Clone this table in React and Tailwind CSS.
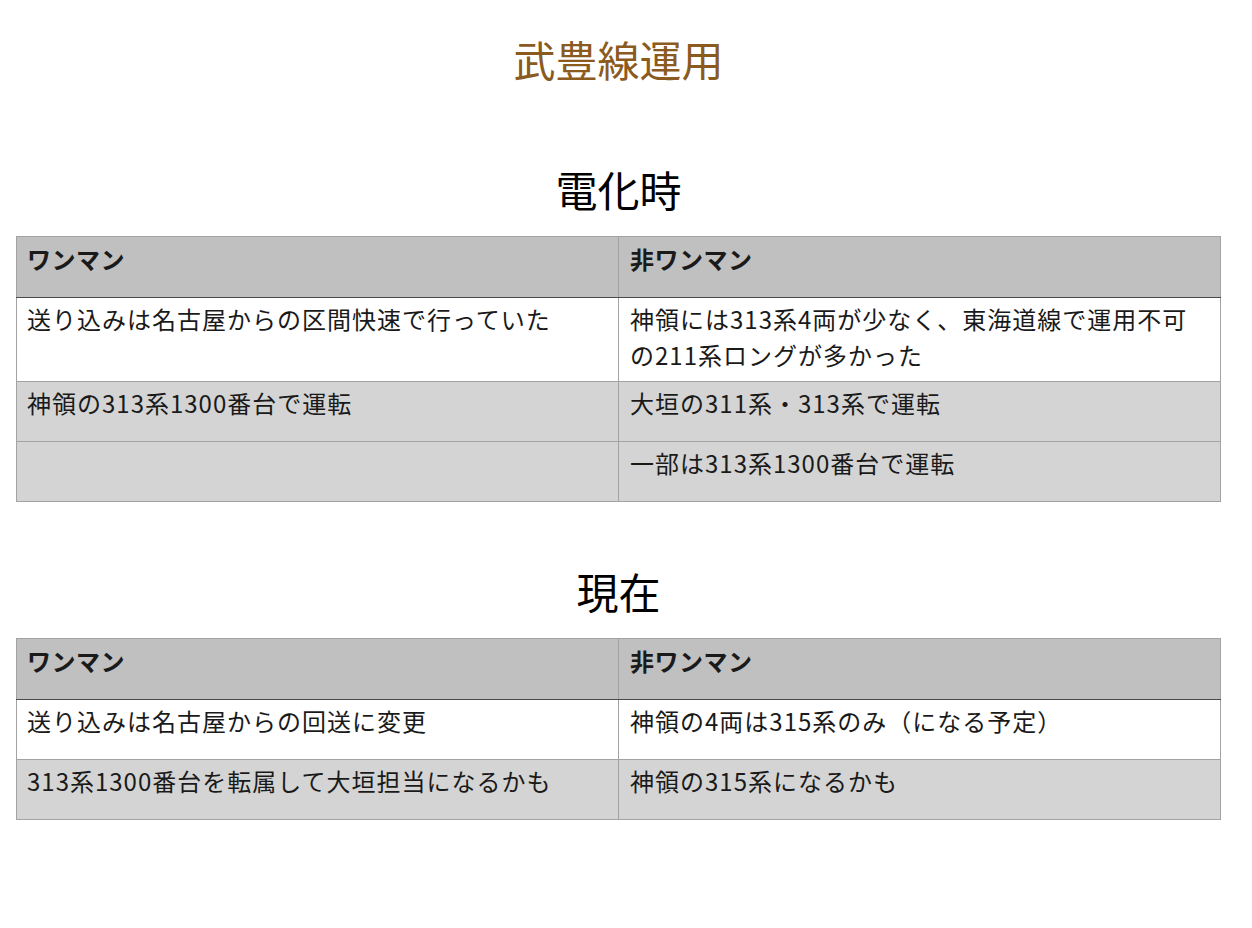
const sections = [
  {
    heading: "電化時",
    rows: [
      { left: "送り込みは名古屋からの区間快速で行っていた", right: "神領には313系4両が少なく、東海道線で運用不可の211系ロングが多かった", bg: "bg-white" },
      { left: "神領の313系1300番台で運転", right: "大垣の311系・313系で運転", bg: "bg-[#d4d4d4]" },
      { left: "", right: "一部は313系1300番台で運転", bg: "bg-[#d4d4d4]" },
    ],
  },
  {
    heading: "現在",
    rows: [
      { left: "送り込みは名古屋からの回送に変更", right: "神領の4両は315系のみ（になる予定）", bg: "bg-white" },
      { left: "313系1300番台を転属して大垣担当になるかも", right: "神領の315系になるかも", bg: "bg-[#d4d4d4]" },
    ],
  },
];

function OpsTable({ rows }) {
  return (
    <table className="w-[1205px] border-collapse table-fixed text-[24px] leading-[36px] text-[#1a1a1a]">
      <thead>
        <tr className="h-[61px] bg-[#bfc0bf]">
          <th className="w-1/2 border border-[#a3a3a3] border-b-[#4a4a4a] px-[10px] pt-[4px] pb-[8px] text-left align-top font-bold tracking-[0.5px]">
            ワンマン
          </th>
          <th className="w-1/2 border border-[#a3a3a3] border-b-[#4a4a4a] px-[11px] pt-[4px] pb-[8px] text-left align-top font-bold tracking-[0.5px]">
            非ワンマン
          </th>
        </tr>
      </thead>
      <tbody>
        {rows.map((r, i) => (
          <tr key={i} className={`h-[60px] ${r.bg}`}>
            <td className="border border-[#a3a3a3] px-[10px] pt-[3px] pb-[8px] align-top tracking-[1px]">{r.left}</td>
            <td className="border border-[#a3a3a3] px-[11px] pt-[3px] pb-[8px] align-top tracking-[1px]">{r.right}</td>
          </tr>
        ))}
      </tbody>
    </table>
  );
}

export default function App() {
  return (
    <div className="min-h-[928px] bg-white pl-4 font-['Noto_Sans_CJK_JP',sans-serif]">
      <h1 className="w-[1205px] pt-[38px] text-center text-[42px] leading-[42px] text-[#8b5a1e]">
        武豊線運用
      </h1>

      {sections.map((s, i) => (
        <section key={s.heading} className={i === 0 ? "mt-[88px]" : "mt-[68px]"}>
          <h2 className="mb-[26px] w-[1205px] text-center text-[42px] leading-[42px] text-black">
            {s.heading}
          </h2>
          <OpsTable rows={s.rows} />
        </section>
      ))}
    </div>
  );
}
